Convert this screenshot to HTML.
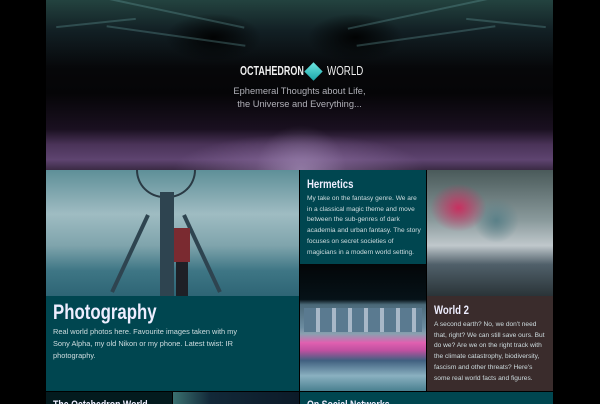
<!DOCTYPE html>
<html><head><meta charset="utf-8"><style>
*{margin:0;padding:0;box-sizing:border-box}
html,body{width:600px;height:404px;overflow:hidden}
body{background:#000;font-family:"Liberation Sans",sans-serif;color:#d8e4e6;position:relative}
#wrap{position:absolute;left:46px;top:0;width:507px;height:404px;overflow:hidden}
#hdr{position:absolute;left:0;top:0;width:507px;height:170px;overflow:hidden;
background:
radial-gradient(ellipse 60px 30px at 33% 22%,rgba(0,0,0,.9),transparent 80%),
radial-gradient(ellipse 60px 30px at 61% 22%,rgba(0,0,0,.9),transparent 80%),
linear-gradient(180deg,rgba(60,120,110,.5) 0%,rgba(40,80,90,.3) 18%,rgba(0,0,0,0) 40%),
radial-gradient(ellipse 140px 40px at 50% 100%,rgba(150,120,170,.7),transparent 90%),
linear-gradient(180deg,#0a0d10 0%,#050507 55%,#1a1020 76%,#4a3358 85%,#5e4470 94%,#3a2a44 100%)}
.br{position:absolute;background:rgba(110,170,170,.3)}
.sq{display:inline-block;transform:scaleX(.8);transform-origin:left top;white-space:nowrap}
#logo{position:absolute;left:194px;top:64px;color:#eee;white-space:nowrap;height:16px}
.dia{position:absolute;width:13px;height:13px;background:linear-gradient(135deg,#6ee6e0,#1aa4a8);transform:rotate(45deg)}
#tag{position:absolute;left:0;width:507px;top:85px;text-align:center;font-size:9.3px;line-height:13px;color:#b0b0b8}
.c{position:absolute;overflow:hidden}
.teal{background:#004650}
h2{font-weight:bold;color:#eef;white-space:nowrap}
p{font-size:6.6px;line-height:10.7px;color:#cfdde0}
</style></head><body>
<div id="wrap">
<div id="hdr">
<div class="br" style="left:40px;top:10px;width:160px;height:2px;transform:rotate(12deg)"></div>
<div class="br" style="left:300px;top:10px;width:170px;height:2px;transform:rotate(-12deg)"></div>
<div class="br" style="left:60px;top:35px;width:140px;height:2px;transform:rotate(8deg)"></div>
<div class="br" style="left:310px;top:35px;width:140px;height:2px;transform:rotate(-8deg)"></div>
<div class="br" style="left:10px;top:22px;width:80px;height:2px;transform:rotate(-6deg)"></div>
<div class="br" style="left:420px;top:22px;width:80px;height:2px;transform:rotate(6deg)"></div>
<div style="position:absolute;left:205px;top:115px;width:100px;height:55px;background:radial-gradient(ellipse 50px 50px at 50% 100%,rgba(170,150,190,.45),transparent 90%)"></div>
<div id="logo"><span class="sq" style="font-weight:bold;font-size:12.5px;transform:scaleX(.72);position:absolute;left:0;top:0">OCTAHEDRON</span><span class="dia" style="left:67px;top:1px"></span><span class="sq" style="font-size:13px;transform:scaleX(.75);position:absolute;left:87px;top:-1px">WORLD</span></div>
<div id="tag">Ephemeral Thoughts about Life,<br>the Universe and Everything...</div>
</div>

<div class="c" style="left:0;top:170px;width:253px;height:126px;background:linear-gradient(180deg,#5e8f98 0%,#9fbcc2 35%,#7fa4ac 60%,#3e7685 80%,#2e6575 100%)">
<div style="position:absolute;left:90px;top:0;width:60px;height:28px;border:2px solid #2a3a44;border-top:none;border-radius:0 0 30px 30px"></div>
<div style="position:absolute;left:114px;top:22px;width:14px;height:104px;background:#2e4450"></div>
<div style="position:absolute;left:100px;top:45px;width:4px;height:85px;background:#2e4450;transform:rotate(25deg);transform-origin:top"></div>
<div style="position:absolute;left:136px;top:45px;width:4px;height:85px;background:#2e4450;transform:rotate(-25deg);transform-origin:top"></div>
<div style="position:absolute;left:128px;top:58px;width:16px;height:34px;background:#7a2a30"></div>
<div style="position:absolute;left:130px;top:92px;width:12px;height:34px;background:#1e2026"></div>
</div>
<div class="c teal" style="left:0;top:296px;width:253px;height:95px;padding:6px 0 0 7px">
<h2 style="font-size:21px;line-height:22px"><span class="sq">Photography</span></h2>
<p style="width:200px;font-size:7.4px;line-height:12px;margin-top:2px">Real world photos here. Favourite images taken with my Sony Alpha, my old Nikon or my phone. Latest twist: IR photography.</p>
</div>

<div class="c teal" style="left:254px;top:170px;width:126px;height:94px;padding:7px 5px 0 7px">
<h2 style="font-size:12px;line-height:14px"><span class="sq">Hermetics</span></h2>
<p style="margin-top:3px">My take on the fantasy genre. We are in a classical magic theme and move between the sub-genres of dark academia and urban fantasy. The story focuses on secret societies of magicians in a modern world setting.</p>
</div>
<div class="c" style="left:254px;top:264px;width:126px;height:127px;background:linear-gradient(180deg,#030608 0%,#061218 28%,#4a6878 32%,#6c8ca0 50%,#8aa0b0 55%,#e060b0 62%,#c050a0 68%,#406080 76%,#8ab0c0 88%,#4a8090 100%)">
<div style="position:absolute;left:4px;top:44px;width:118px;height:24px;background:repeating-linear-gradient(90deg,#5a7a90 0 12px,#a8b8c8 12px 16px)"></div>
</div>

<div class="c" style="left:381px;top:170px;width:126px;height:126px;background:
radial-gradient(ellipse 35px 30px at 25% 30%,#c83060,transparent 80%),
radial-gradient(ellipse 25px 25px at 55% 40%,#5a8088,transparent 90%),
linear-gradient(180deg,#4a5a5a 0%,#8a9a9c 40%,#c0c8cc 60%,#50606a 75%,#2a3438 100%)"></div>
<div class="c" style="left:381px;top:296px;width:126px;height:95px;background:#3a2c2c;padding:7px 5px 0 7px">
<h2 style="font-size:12px;line-height:14px"><span class="sq">World 2</span></h2>
<p style="margin-top:3px">A second earth? No, we don't need that, right? We can still save ours. But do we? Are we on the right track with the climate catastrophy, biodiversity, fascism and other threats? Here's some real world facts and figures.</p>
</div>

<div class="c" style="left:0;top:392px;width:126px;height:12px;background:#031a1e;padding:7px 0 0 7px"><h2 style="font-size:11px"><span class="sq">The Octahedron World</span></h2></div>
<div class="c" style="left:127px;top:392px;width:126px;height:12px;background:linear-gradient(90deg,#3a7070,#122838 30%,#0c1a28)"></div>
<div class="c teal" style="left:254px;top:392px;width:253px;height:12px;padding:7px 0 0 7px"><h2 style="font-size:11px"><span class="sq">On Social Networks</span></h2></div>
</div>
</body></html>
